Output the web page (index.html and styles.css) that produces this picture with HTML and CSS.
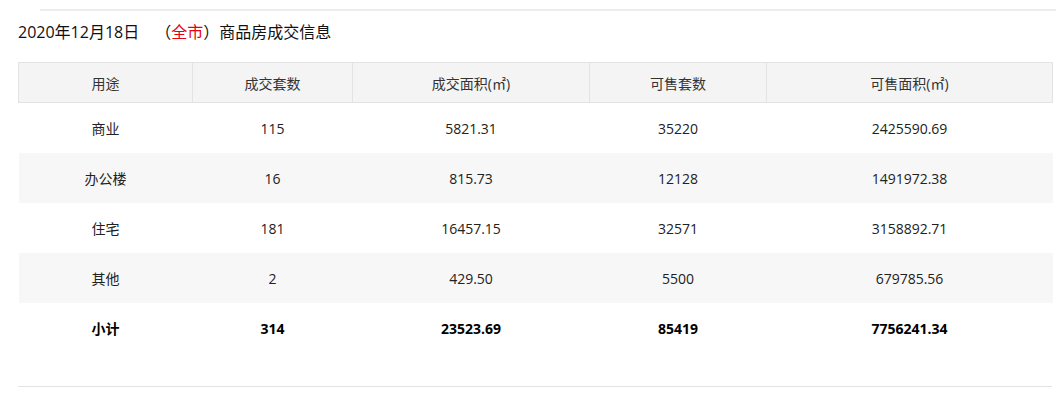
FILE: index.html
```html
<!DOCTYPE html>
<html lang="zh-CN">
<head>
<meta charset="utf-8">
<link rel="stylesheet" href="styles.css">
</head>
<body>
<div class="page">
  <div class="top-rule"></div>
  <h2 class="title">2020年12月18日<span class="gap"></span>（<span class="red">全市</span>）商品房成交信息</h2>
  <table class="data">
    <colgroup>
      <col class="c1"><col class="c2"><col class="c3"><col class="c4"><col class="c5">
    </colgroup>
    <thead>
      <tr><th>用途</th><th>成交套数</th><th>成交面积(㎡)</th><th>可售套数</th><th>可售面积(㎡)</th></tr>
    </thead>
    <tbody>
      <tr><td>商业</td><td>115</td><td>5821.31</td><td>35220</td><td>2425590.69</td></tr>
      <tr class="alt"><td>办公楼</td><td>16</td><td>815.73</td><td>12128</td><td>1491972.38</td></tr>
      <tr><td>住宅</td><td>181</td><td>16457.15</td><td>32571</td><td>3158892.71</td></tr>
      <tr class="alt"><td>其他</td><td>2</td><td>429.50</td><td>5500</td><td>679785.56</td></tr>
      <tr class="total"><td>小计</td><td>314</td><td>23523.69</td><td>85419</td><td>7756241.34</td></tr>
    </tbody>
  </table>
  <div class="bottom-rule"></div>
</div>
</body>
</html>
```

FILE: styles.css
```css
html, body {
  margin: 0;
  padding: 0;
  background: #fff;
}
body {
  font-family: "Open Sans", "Noto Sans CJK SC", sans-serif;
  color: #222;
}
.page {
  padding: 9px 6px 0 18px;
  width: 1034px;
}
.top-rule {
  height: 2px;
  background: #ececec;
  margin-left: 22px;
  margin-right: -4px;
}
.title {
  margin: 0;
  height: 51px;
  line-height: 42px;
  font-size: 16px;
  font-weight: normal;
  color: #111;
}
.gap {
  display: inline-block;
  width: 16px;
}
.red {
  color: #e60012;
}
.data {
  width: 1034px;
  border-collapse: collapse;
  table-layout: fixed;
  font-size: 14px;
}
.c1 { width: 174px; }
.c2 { width: 160px; }
.c3 { width: 237px; }
.c4 { width: 177px; }
.c5 { width: 286px; }
.data th {
  height: 39px;
  padding: 0;
  background: #f4f4f4;
  border: 1px solid #e3e3e3;
  font-weight: normal;
  color: #333;
  text-align: center;
}
.data td {
  height: 50px;
  padding: 0;
  text-align: center;
  color: #222;
}
.data tr.alt td {
  background: #f7f7f7;
}
.data tr.total td {
  font-weight: bold;
  color: #000;
}
.bottom-rule {
  height: 1px;
  background: #e3e3e3;
  margin-top: 33px;
}
```
